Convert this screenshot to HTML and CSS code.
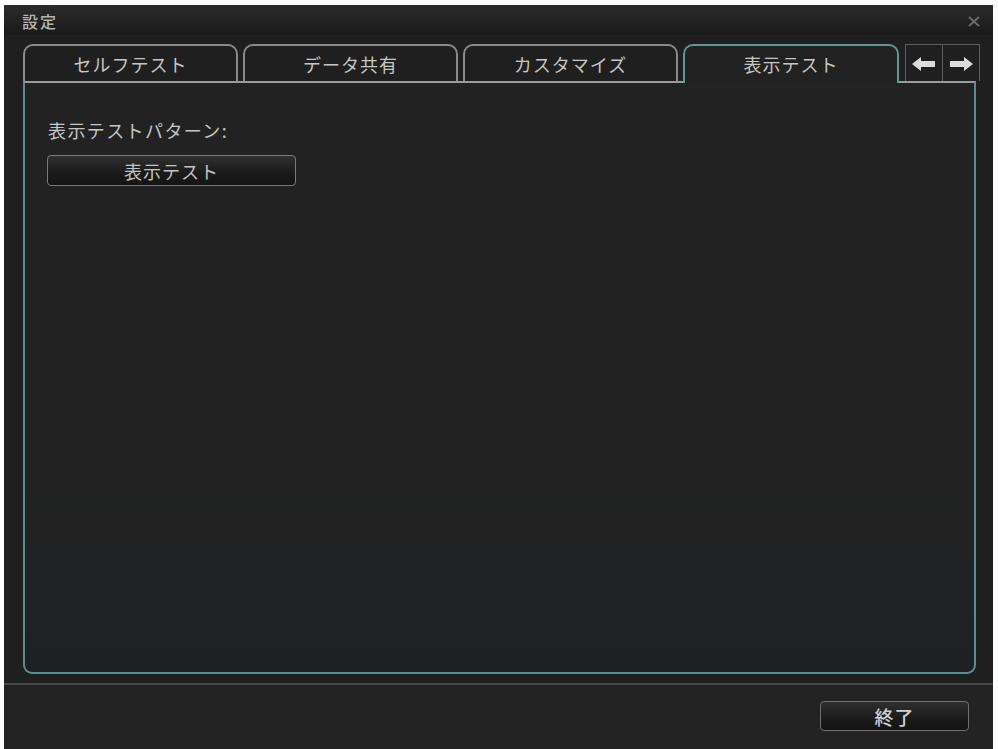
FILE: index.html
```html
<!DOCTYPE html>
<html lang="ja">
<head>
  <meta charset="UTF-8">
  <title>設定</title>
  <link rel="stylesheet" href="styles.css">
</head>
<body>
  <div class="window">
    <div class="titlebar">
      <span class="title">設定</span>
      <svg class="close" width="12" height="11" viewBox="0 0 12 11">
        <path d="M1 1 L11 10 M11 1 L1 10" stroke="#6d6d6d" stroke-width="1.8" fill="none"/>
      </svg>
    </div>

    <div class="main">
      <div class="tabs">
        <div class="tab">セルフテスト</div>
        <div class="tab">データ共有</div>
        <div class="tab">カスタマイズ</div>
        <div class="tab active">表示テスト</div>
        <div class="arrows">
          <div class="arrow">
            <svg width="24" height="14" viewBox="0 0 24 14">
              <path d="M0 7 L9 0 L9 4 L23 4 L23 10 L9 10 L9 14 Z" fill="#dcdcdc"/>
            </svg>
          </div>
          <div class="arrow">
            <svg width="24" height="14" viewBox="0 0 24 14">
              <path d="M24 7 L15 0 L15 4 L1 4 L1 10 L15 10 L15 14 Z" fill="#dcdcdc"/>
            </svg>
          </div>
        </div>
      </div>

      <div class="panel">
        <div class="label">表示テストパターン:</div>
        <button class="btn test-btn">表示テスト</button>
      </div>
    </div>

    <div class="footer">
      <button class="btn exit-btn">終了</button>
    </div>
  </div>
</body>
</html>
```

FILE: styles.css
```css
* {
  box-sizing: border-box;
}

html, body {
  margin: 0;
  padding: 0;
  background: #ffffff;
  font-family: "Noto Sans CJK JP", "Noto Sans", sans-serif;
}

body {
  padding: 5px 0 0 4px;
}

.window {
  width: 989px;
  height: 744px;
  background: #1f1f1f;
  display: flex;
  flex-direction: column;
}

.titlebar {
  height: 30px;
  display: flex;
  align-items: center;
  justify-content: space-between;
  padding: 2px 13px 0 18px;
  background: linear-gradient(#2b2b2b, #1a1a1a);
}

.title {
  color: #b4b4b4;
  font-size: 16px;
  font-weight: 500;
  letter-spacing: 2px;
  line-height: 20px;
}

.close {
  display: block;
}

.main {
  padding: 9px 0 9px 19px;
}

.tabs {
  display: flex;
  align-items: flex-end;
  height: 37px;
}

.tab {
  width: 215px;
  height: 37px;
  margin-right: 5px;
  border: 2px solid #8a8a8a;
  border-bottom: none;
  border-radius: 10px 10px 0 0;
  color: #c6c6c6;
  font-size: 18px;
  letter-spacing: 1px;
  display: flex;
  align-items: center;
  justify-content: center;
  padding-top: 1px;
}

.tab.active {
  width: 216px;
  height: 39px;
  margin: 0 0 -2px 0;
  border-color: #5f9893;
  background: #212121;
  position: relative;
  z-index: 1;
  padding-bottom: 2px;
}

.arrows {
  display: flex;
  margin-left: 6px;
  height: 37px;
}

.arrow {
  width: 38px;
  height: 37px;
  border: 1px solid #5c5c5c;
  border-bottom: none;
  display: flex;
  align-items: center;
  justify-content: center;
  padding-top: 2px;
}

.arrow + .arrow {
  border-left: none;
  width: 37px;
}

.panel {
  width: 953px;
  height: 593px;
  border: 2px solid #5b8e8a;
  border-top-color: #9a9a9a;
  border-radius: 0 0 9px 9px;
  background: linear-gradient(#222222 70%, #1e2124);
  padding: 34px 0 0 23px;
}

.label {
  color: #c6c6c6;
  font-size: 18px;
  letter-spacing: 1.4px;
  line-height: 26px;
}

.btn {
  display: flex;
  align-items: center;
  justify-content: center;
  font-family: "Noto Sans CJK JP", "Noto Sans", sans-serif;
  color: #c4c4c4;
  font-size: 18px;
  letter-spacing: 1px;
  border: 1px solid #7a7a7a;
  border-radius: 4px;
  background: linear-gradient(#303030, #1a1a1a 60%, #141414);
  padding: 0;
}

.test-btn {
  width: 249px;
  height: 31px;
  margin: 12px 0 0 -1px;
}

.footer {
  flex: 1;
  border-top: 2px solid #4a4a4a;
  background: #232323;
  display: flex;
  justify-content: flex-end;
  align-items: flex-start;
  padding: 16px 24px 0 0;
}

.exit-btn {
  width: 149px;
  height: 30px;
  font-size: 19px;
  font-weight: 500;
  color: #d0d0d0;
  border-color: #6e6e6e;
}
```
